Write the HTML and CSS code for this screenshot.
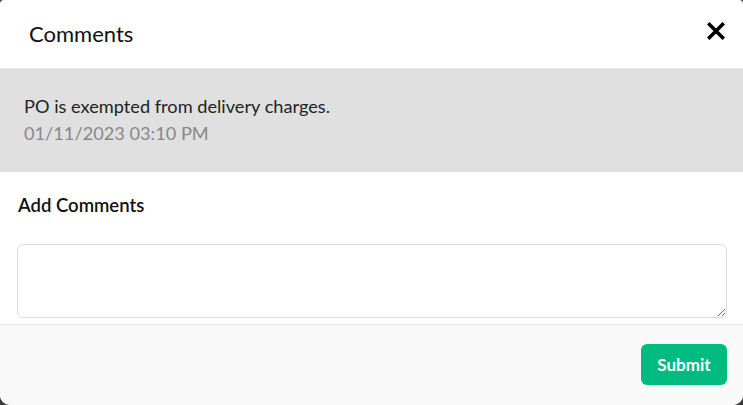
FILE: index.html
```html
<!DOCTYPE html>
<html>
<head>
<meta charset="utf-8">
<link rel="stylesheet" href="styles.css">
</head>
<body>
<div class="modal">
  <div class="header">
    <h2 class="title">Comments</h2>
    <button class="close" aria-label="Close">
      <svg width="18" height="18" viewBox="0 0 18 18"><path d="M2.5 2.5 L15.5 15.5 M15.5 2.5 L2.5 15.5" stroke="#000" stroke-width="3.6" stroke-linecap="square"/></svg>
    </button>
  </div>
  <div class="comment">
    <div class="comment-text">PO is exempted from delivery charges.</div>
    <div class="comment-date">01/11/2023 03:10 PM</div>
  </div>
  <div class="add">
    <div class="add-label">Add Comments</div>
    <textarea class="input"></textarea>
  </div>
  <div class="footer">
    <button class="submit">Submit</button>
  </div>
</div>
</body>
</html>
```
FILE: styles.css
```css
html, body { margin: 0; padding: 0; }
body {
  background: #3a3a3a;
  width: 743px;
  height: 405px;
  overflow: hidden;
  font-family: "Lato", "Open Sans", sans-serif;
}
.modal {
  width: 743px;
  height: 405px;
  background: #fff;
  border-radius: 4px 4px 10px 10px;
  overflow: hidden;
  display: flex;
  flex-direction: column;
}
.header {
  display: flex;
  align-items: center;
  justify-content: space-between;
  padding: 0 18px 0 29px;
  border-bottom: 1px solid #e6e6e6;
  box-sizing: border-box;
  height: 69px;
}
.title {
  margin: 0;
  font-size: 22px;
  font-weight: 400;
  color: #111;
  padding-bottom: 1px;
}
.close {
  border: 0;
  background: none;
  padding: 0;
  width: 18px;
  height: 18px;
  margin-bottom: 6px;
  display: flex;
}
.comment {
  background: #e0e0e0;
  height: 103px;
  box-sizing: border-box;
  padding: 25px 24px 0;
}
.comment-text {
  font-size: 18.2px;
  color: #222;
  line-height: 24px;
}
.comment-date {
  font-size: 18.2px;
  color: #888;
  line-height: 24px;
  margin-top: 3px;
}
.add {
  padding: 20px 16px 0 17px;
  flex: 1;
}
.add-label {
  font-size: 18.5px;
  font-weight: 600;
  color: #111;
  line-height: 26px;
  margin-left: 1px;
}
.input {
  display: block;
  margin-top: 26px;
  width: 710px;
  height: 74px;
  box-sizing: border-box;
  border: 1px solid #dcdcdc;
  border-radius: 6px;
  resize: vertical;
  font-family: inherit;
}
.footer {
  height: 81px;
  box-sizing: border-box;
  background: #f9f9f9;
  border-top: 1px solid #e6e6e6;
  display: flex;
  justify-content: flex-end;
  align-items: flex-start;
  padding: 19px 16px 0 0;
}
.submit {
  width: 86px;
  height: 41px;
  border: 0;
  border-radius: 6px;
  background: #00bb80;
  color: #fff;
  font-family: inherit;
  font-size: 17px;
  font-weight: 700;
}
```
